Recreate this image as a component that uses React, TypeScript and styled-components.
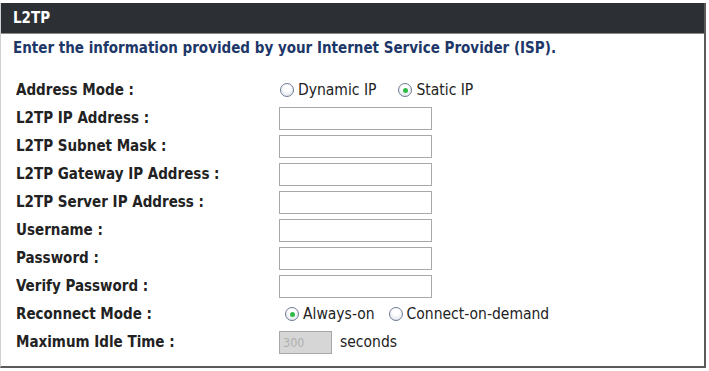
import React from 'react';
import styled, { createGlobalStyle } from 'styled-components';

const Global = createGlobalStyle`
    body {
        margin: 0;
        background: #fff;
        font-family: "DejaVu Sans Condensed", "DejaVu Sans", sans-serif;
    }
`;

const Panel = styled.div`
    margin-top: 3px;
    width: 706px;
    height: 365px;
    box-sizing: border-box;
    border-left: 1px solid #d0d0d0;
    border-right: 2px solid #5a5a5a;
    border-bottom: 2px solid #5a5a5a;
`;

const Header = styled.div`
    height: 30px;
    background: #2c2f33;
    border-bottom: 1px solid #8a8a8a;
    color: #fff;
    font-weight: bold;
    font-size: 15px;
    line-height: 30px;
    padding-left: 12px;
`;

const Intro = styled.div`
    color: #1d3768;
    font-weight: bold;
    font-size: 15px;
    padding: 3px 0 0 12px;
    height: 22px;
    line-height: 22px;
`;

const Form = styled.div`
    display: grid;
    grid-template-columns: 263px 1fr;
    grid-auto-rows: 28px;
    padding: 17px 0 0 15px;
    align-items: center;
`;

const Label = styled.div`
    font-weight: bold;
    font-size: 15px;
    color: #222;
`;

const Field = styled.div<{ $indent?: number }>`
    display: flex;
    align-items: center;
    font-size: 15.5px;
    color: #222;
    padding-left: ${(p) => p.$indent ?? 0}px;
`;

const TextBox = styled.div<{ $w?: number; $disabled?: boolean }>`
    width: ${(p) => p.$w ?? 148}px;
    height: 21px;
    box-sizing: content-box;
    border: 1px solid #a8a8a8;
    background: ${(p) => (p.$disabled ? '#d6d6d6' : '#fff')};
    color: #b0b0b0;
    font-size: 12.5px;
    line-height: 21px;
    padding-left: 3px;
`;

const Option = styled.span<{ $gap?: number }>`
    display: inline-flex;
    align-items: center;
    margin-right: ${(p) => p.$gap ?? 0}px;
`;

const Radio = styled.span<{ $on?: boolean }>`
    width: 12px;
    height: 12px;
    border-radius: 50%;
    border: 1px solid #6f7c92;
    background: radial-gradient(circle at 50% 35%, #fff 30%, #d6dce6 100%);
    margin-right: 4px;
    display: inline-flex;
    align-items: center;
    justify-content: center;
    &::after {
        content: '';
        width: 5px;
        height: 5px;
        border-radius: 50%;
        background: ${(p) => (p.$on ? '#2dbb45' : 'transparent')};
    }
`;

const Unit = styled.span`
    margin-left: 8px;
`;

const textRows = [
    'L2TP IP Address :',
    'L2TP Subnet Mask :',
    'L2TP Gateway IP Address :',
    'L2TP Server IP Address :',
    'Username :',
    'Password :',
    'Verify Password :',
];

export default function App() {
    return (
        <>
            <Global />
            <Panel>
                <Header>L2TP</Header>
                <Intro>Enter the information provided by your Internet Service Provider (ISP).</Intro>
                <Form>
                    <Label>Address Mode :</Label>
                    <Field $indent={1}>
                        <Option $gap={22}>
                            <Radio />
                            Dynamic IP
                        </Option>
                        <Option>
                            <Radio $on />
                            Static IP
                        </Option>
                    </Field>
                    {textRows.map((label) => (
                        <React.Fragment key={label}>
                            <Label>{label}</Label>
                            <Field>
                                <TextBox />
                            </Field>
                        </React.Fragment>
                    ))}
                    <Label>Reconnect Mode :</Label>
                    <Field $indent={6}>
                        <Option $gap={14}>
                            <Radio $on />
                            Always-on
                        </Option>
                        <Option>
                            <Radio />
                            Connect-on-demand
                        </Option>
                    </Field>
                    <Label>Maximum Idle Time :</Label>
                    <Field>
                        <TextBox $w={48} $disabled>
                            300
                        </TextBox>
                        <Unit>seconds</Unit>
                    </Field>
                </Form>
            </Panel>
        </>
    );
}
